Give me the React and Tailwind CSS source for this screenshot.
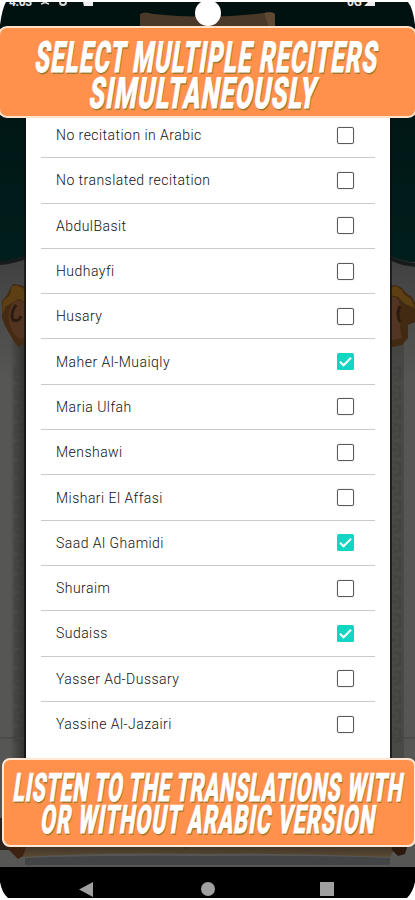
import React, { useState } from 'react';

const RECITERS = [
  'No recitation in Arabic',
  'No translated recitation',
  'AbdulBasit',
  'Hudhayfi',
  'Husary',
  'Maher Al-Muaiqly',
  'Maria Ulfah',
  'Menshawi',
  'Mishari El Affasi',
  'Saad Al Ghamidi',
  'Shuraim',
  'Sudaiss',
  'Yasser Ad-Dussary',
  'Yassine Al-Jazairi',
];

// dimmed app screen behind the dialog
function Backdrop() {
  const marks = [];
  for (let y = 368; y < 735; y += 19) marks.push(y);

  return (
    <svg className="absolute inset-0" width="415" height="900" viewBox="0 0 415 900">
      <defs>
        <linearGradient id="green" x1="0" y1="0" x2="0" y2="1">
          <stop offset="0" stopColor="#00110f" />
          <stop offset="0.6" stopColor="#001918" />
          <stop offset="1" stopColor="#001f1c" />
        </linearGradient>
        <linearGradient id="paper" x1="0" y1="0" x2="0" y2="1">
          <stop offset="0" stopColor="#3f3f40" />
          <stop offset="1" stopColor="#565654" />
        </linearGradient>
        <linearGradient id="edge" x1="0" y1="0" x2="1" y2="0">
          <stop offset="0" stopColor="#222222" stopOpacity="0" />
          <stop offset="1" stopColor="#222222" stopOpacity="0.75" />
        </linearGradient>
        <linearGradient id="scroll" x1="0" y1="0" x2="0" y2="1">
          <stop offset="0" stopColor="#30271f" />
          <stop offset="1" stopColor="#5a4a34" />
        </linearGradient>
      </defs>
      <rect y="2" width="415" height="896" fill="#565654" />
      <rect y="250" width="415" height="130" fill="url(#paper)" />
      <rect x="10" y="340" width="16" height="418" fill="url(#edge)" />
      <rect x="390" y="340" width="14" height="418" fill="#30302f" opacity="0.35" />
      <path d="M0 2H415V262Q407 263 390 256H26Q14 262 0 263Z" fill="url(#green)" />
      <path d="M0 263Q14 262 26 257M415 265Q402 264 390 258" fill="none" stroke="#171b1b" strokeWidth="4" />
      {marks.map((y) => (
        <g key={y} stroke="#393a38" strokeWidth="3" fill="none" opacity="0.3">
          <path d={`M21 ${y}h-6v12h6m-3 -6h5`} />
          <path d={`M394 ${y}h6v12h-6m3 -6h-5`} />
        </g>
      ))}
      <path d="M0 738H26M390 738H415" stroke="#434341" />
      <path d="M140 14Q145 11 153 14Q208 20 264 13Q272 11 275 14V27H140Z" fill="#4a3928" />
      <path d="M264 13Q272 11 275 14V27H269Z" fill="#604932" />

      <g>
        <path d="M26 287L20 285L13 284L10 289L7 295L2 301L2 318L5 326L9 333L15 343L19 347L26 341Z" fill="#452b12" />
        <path d="M26 290L18 286L12 286L10 295L3 301L2 314L6 306L12 303L19 299L26 303Z" fill="#5c3f12" />
        <path d="M13 303Q19 297 26 305V338Q16 342 10 326Q6 311 13 303Z" fill="#523420" />
        <path d="M16 305Q10 313 13 320Q19 322 21 316" fill="none" stroke="#2c1b10" strokeWidth="3" />
      </g>
      <g>
        <path d="M390 286L396 285L402 288L406 293L412 297L415 303V322L408 325L408 338L402 345L392 347L390 343Z" fill="#412912" />
        <path d="M390 288L396 286L402 290L404 294L411 299L415 308L405 304L398 297L390 295Z" fill="#5c3f12" />
        <path d="M390 298Q398 294 400 305Q398 321 402 338L390 341Z" fill="#523623" />
        <path d="M400 306Q396 314 400 322" fill="none" stroke="#2c1b10" strokeWidth="3" />
      </g>
      <path d="M25 118V758M391 118V758" stroke="#0c0f0f" strokeWidth="2" opacity="0.7" />

      <rect x="0" y="818" width="10" height="32" fill="#2a201c" />
      <path d="M22 840H400L390 857Q300 853 208 854Q100 852 22 857Z" fill="url(#scroll)" />
      <path d="M25 858Q100 855 208 856Q310 855 390 858V865H25Z" fill="#424446" />
      <path d="M3 838L9 850L18 859L23 856L27 844V838Z" fill="#3d2212" />
      <path d="M390 838L392 850L398 856L405 854L408 844V838Z" fill="#2c190e" />
      <path d="M186 844V849" stroke="#2b2118" />
    </svg>
  );
}

function StatusBar() {
  return (
    <div className="flex h-[26px] justify-between pt-[2px]">
      <div className="flex h-[4px] items-end overflow-hidden pl-[9px] font-['Roboto'] text-[12px] leading-[12px] font-bold text-gray-200">
        <span className="mb-[-2px] tracking-tight">4:03</span>
        <svg className="ml-[8px]" width="10" height="4">
          <path d="M1 2L4 1V0H6V1L9 2" fill="none" stroke="#ddd" strokeWidth="1.5" />
        </svg>
        <svg className="ml-[9px]" width="8" height="4">
          <path d="M1 0Q1 3 4 3Q7 3 7 0" fill="none" stroke="#ddd" strokeWidth="2" />
        </svg>
        <svg className="ml-[16px]" width="11" height="4">
          <path d="M0 0H10V4H1Z" fill="#eee" />
        </svg>
      </div>
      <div className="flex h-[4px] items-end overflow-hidden pr-[38px] font-['Roboto'] text-[12px] leading-[12px] font-bold text-gray-200">
        <span className="mb-[-2px]">0G</span>
        <svg className="ml-[2px]" width="13" height="4">
          <path d="M0 4L4 0H11V4Z" fill="#eee" />
        </svg>
      </div>
    </div>
  );
}

function Checkbox({ checked }) {
  if (checked) {
    return (
      <svg width="17" height="17" viewBox="0 0 17 17">
        <rect width="17" height="17" rx="1.5" fill="#12d6c2" />
        <path d="M3 8.7L6.6 12.3L14 4.8" fill="none" stroke="white" strokeWidth="2" />
      </svg>
    );
  }
  return <span className="block h-[17px] w-[17px] rounded-[2px] border-[1.5px] border-[#5b5b5b] shadow-[0_0_1px_#777]" />;
}

const lettering =
  "block origin-center font-['Roboto'] font-extrabold whitespace-nowrap text-white [-webkit-text-stroke:1px_white] [text-shadow:2px_1.5px_1px_#9b772b]";

export default function App() {
  const [selected, setSelected] = useState(['Maher Al-Muaiqly', 'Saad Al Ghamidi', 'Sudaiss']);

  const toggle = (name) => {
    setSelected(selected.includes(name) ? selected.filter((n) => n !== name) : [...selected, name]);
  };

  return (
    <div className="relative h-[900px] w-[415px] overflow-hidden bg-white">
      <Backdrop />

      <div className="relative flex h-full flex-col">
        <StatusBar />

        <h1 className="-mx-[2px] flex h-[92px] shrink-0 flex-col items-center justify-center overflow-hidden rounded-[9px] border-2 border-[#ffe2cb] bg-[#ff914d] pt-[5px] text-[43px] leading-[36px]">
          <span className={`${lettering} scale-x-[0.55] -skew-x-[15deg] tracking-[2.2px]`}>SELECT MULTIPLE RECITERS</span>
          <span className={`${lettering} -ml-[6px] scale-x-[0.58] -skew-x-[15deg] tracking-[2.2px]`}>SIMULTANEOUSLY</span>
        </h1>

        <div className="mr-[25px] ml-[26px] h-[640px] overflow-hidden bg-white px-[15px]">
          <ul className="-mt-[5px]">
            {RECITERS.map((name) => (
              <li
                key={name}
                onClick={() => toggle(name)}
                className="flex h-[45.3px] cursor-pointer items-center justify-between border-b-[1.5px] border-[#cbcbcb] pr-[21px] pl-[15px] last:border-transparent"
              >
                <span className="pt-[1px] font-['Roboto'] text-[14px] font-light tracking-[0.46px] text-[#111]">{name}</span>
                <Checkbox checked={selected.includes(name)} />
              </li>
            ))}
          </ul>
        </div>

        <h2 className="-mr-[1px] ml-[2px] flex h-[89px] shrink-0 flex-col items-center justify-center overflow-hidden rounded-[8px] border-2 border-[#ffe8d5] bg-[#ff914d] pt-[3px] text-[39px] leading-[32px]">
          <span className={`${lettering} scale-x-[0.54] -skew-x-[15deg] tracking-[1.5px]`}>LISTEN TO THE TRANSLATIONS WITH</span>
          <span className={`${lettering} scale-x-[0.547] -skew-x-[15deg] tracking-[2.2px]`}>OR WITHOUT ARABIC VERSION</span>
        </h2>

        <div className="mt-[20px] flex h-[31px] shrink-0 items-center bg-black pt-[13px] pl-[79px]">
          <svg width="15" height="15">
            <path d="M0 7.5L14 0V15Z" fill="#a0a0a0" />
          </svg>
          <span className="ml-[107px] h-[14px] w-[14px] rounded-full bg-[#a0a0a0]" />
          <span className="ml-[105px] h-[14px] w-[14px] bg-[#a0a0a0]" />
        </div>
      </div>

      {/* screen corners and camera cutout */}
      <svg className="absolute inset-0" width="415" height="900" viewBox="0 0 415 900">
        <path d="M0 0H415V25Q413 8 408 2H6Q2 9 0 25Z" fill="white" />
        <path d="M0 882Q2 893 8 898H407Q413 892 415 882V900H0Z" fill="white" />
        <circle cx="208" cy="13" r="13" fill="white" />
      </svg>
    </div>
  );
}
